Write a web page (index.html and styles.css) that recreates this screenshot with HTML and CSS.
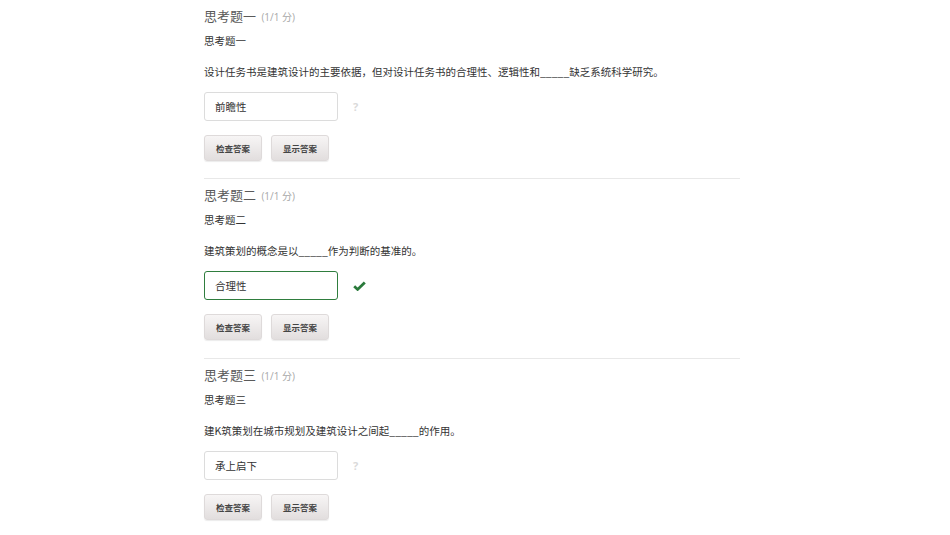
FILE: index.html
```html
<!DOCTYPE html>
<html lang="zh-CN">

<head>
    <meta charset="UTF-8">
    <meta name="viewport" content="width=device-width, initial-scale=1.0">
    <title>思考题</title>
    <link rel="stylesheet" href="styles.css">
</head>

<body>
    <main class="problems">
        <!-- problem 1 -->
        <div class="problem">
            <h2 class="problem-title">思考题一 <span class="score">(1/1 分)</span></h2>
            <p class="problem-name">思考题一</p>
            <p class="problem-text">设计任务书是建筑设计的主要依据，但对设计任务书的合理性、逻辑性和_____缺乏系统科学研究。</p>
            <div class="answer-row">
                <input class="answer" type="text" value="前瞻性">
                <span class="status unknown">?</span>
            </div>
            <div class="actions">
                <button class="btn">检查答案</button>
                <button class="btn">显示答案</button>
            </div>
        </div>

        <!-- problem 2 -->
        <div class="problem">
            <h2 class="problem-title">思考题二 <span class="score">(1/1 分)</span></h2>
            <p class="problem-name">思考题二</p>
            <p class="problem-text">建筑策划的概念是以_____作为判断的基准的。</p>
            <div class="answer-row">
                <input class="answer correct" type="text" value="合理性">
                <span class="status">
                    <svg width="13" height="10" viewBox="0 0 13 10">
                        <path d="M1.2 5.2 L4.6 8.4 L11.8 1.4" fill="none" stroke="#2a7a3b" stroke-width="2.8" stroke-linejoin="miter"/>
                    </svg>
                </span>
            </div>
            <div class="actions">
                <button class="btn">检查答案</button>
                <button class="btn">显示答案</button>
            </div>
        </div>

        <!-- problem 3 -->
        <div class="problem">
            <h2 class="problem-title">思考题三 <span class="score">(1/1 分)</span></h2>
            <p class="problem-name">思考题三</p>
            <p class="problem-text">建K筑策划在城市规划及建筑设计之间起_____的作用。</p>
            <div class="answer-row">
                <input class="answer" type="text" value="承上启下">
                <span class="status unknown">?</span>
            </div>
            <div class="actions">
                <button class="btn">检查答案</button>
                <button class="btn">显示答案</button>
            </div>
        </div>
    </main>
</body>

</html>
```

FILE: styles.css
```css
/* Reset some default styles */
body,
h2,
p {
    margin: 0;
    padding: 0;
}

body {
    font-family: "Open Sans", "Noto Sans CJK SC", sans-serif;
    background-color: #fff;
    color: #333;
}

.problems {
    width: 536px;
    margin-left: 204px;
}

.problem {
    padding: 7px 0 18px;
}

.problem:first-child {
    padding-bottom: 17px;
}

.problem + .problem {
    border-top: 1px solid #e8e8e8;
}

.problem-title {
    height: 18px;
    font-size: 13px;
    line-height: 18px;
    font-weight: normal;
    color: #5a5a5a;
}

.score {
    font-size: 10px;
    color: #a8a8a8;
    margin-left: 2px;
}

.problem-name,
.problem-text {
    height: 14px;
    font-family: "Noto Sans CJK SC", sans-serif;
    font-size: 10.5px;
    line-height: 14px;
    color: #333;
}

.problem-name {
    margin-top: 9px;
}

.problem-text {
    margin-top: 17px;
}

/* answer input */
.answer-row {
    display: flex;
    align-items: center;
    gap: 14px;
    margin-top: 13px;
}

.answer {
    box-sizing: border-box;
    width: 134px;
    height: 29px;
    padding: 0 10px;
    border: 1px solid #dcdcdc;
    border-radius: 3px;
    font-family: "Noto Sans CJK SC", sans-serif;
    font-size: 10.5px;
    color: #333;
    background: #fff;
    outline: none;
}

.answer.correct {
    border-color: #2f7d3e;
}

.status {
    display: flex;
    align-items: center;
    font-size: 11px;
    font-weight: bold;
    padding-left: 1px;
}

.status.unknown {
    color: #dadada;
}

/* Button styles */
.actions {
    display: flex;
    gap: 9px;
    margin-top: 14px;
}

.btn {
    box-sizing: border-box;
    width: 58px;
    height: 26px;
    padding: 0;
    border: 1px solid #dedada;
    border-radius: 3px;
    background: linear-gradient(#f7f5f5, #e2dede);
    box-shadow: 0 1px 1px rgba(0, 0, 0, 0.08);
    font-family: "Noto Sans CJK SC", sans-serif;
    font-size: 8.5px;
    font-weight: bold;
    color: #444;
    cursor: pointer;
}
```
